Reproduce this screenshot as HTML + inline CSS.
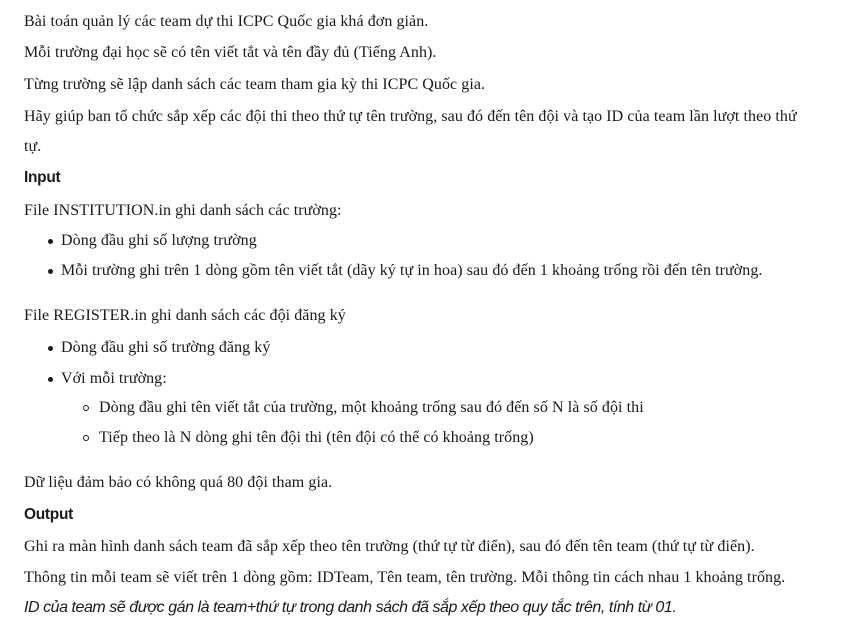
<!DOCTYPE html>
<html><head><meta charset="utf-8"><style>
html,body{margin:0;padding:0;background:#fff;width:845px;height:624px;overflow:hidden}
.l{position:absolute;left:24px;font-family:"Liberation Serif","Noto Serif CJK SC",serif;font-size:16px;line-height:20px;color:#1a1a1a;white-space:nowrap;letter-spacing:0.07px}
.h{font-family:"Liberation Sans",sans-serif;font-weight:bold;font-size:15.5px;letter-spacing:-0.3px}
.i{font-family:"Liberation Sans",sans-serif;font-style:italic;font-size:16px;letter-spacing:-0.45px}
.b{left:61px}.b::before{content:"";position:absolute;left:-13px;top:8px;width:5px;height:5px;border-radius:50%;background:#1a1a1a}
.c{left:99px}.c::before{content:"";position:absolute;left:-16px;top:7px;width:4px;height:4px;border-radius:50%;border:1px solid #1a1a1a}
</style></head><body>
<div class="l" style="top:12px">Bài toán quản lý các team dự thi ICPC Quốc gia khá đơn giản.</div>
<div class="l" style="top:43px">Mỗi trường đại học sẽ có tên viết tắt và tên đầy đủ (Tiếng Anh).</div>
<div class="l" style="top:75px">Từng trường sẽ lập danh sách các team tham gia kỳ thi ICPC Quốc gia.</div>
<div class="l" style="top:107px">Hãy giúp ban tổ chức sắp xếp các đội thi theo thứ tự tên trường, sau đó đến tên đội và tạo ID của team lần lượt theo thứ</div>
<div class="l" style="top:137px">tự.</div>
<div class="l h" style="top:168px">Input</div>
<div class="l" style="top:201px">File INSTITUTION.in ghi danh sách các trường:</div>
<div class="l b" style="top:231px">Dòng đầu ghi số lượng trường</div>
<div class="l b" style="top:261px">Mỗi trường ghi trên 1 dòng gồm tên viết tắt (dãy ký tự in hoa) sau đó đến 1 khoảng trống rồi đến tên trường.</div>
<div class="l" style="top:306px">File REGISTER.in ghi danh sách các đội đăng ký</div>
<div class="l b" style="top:338px">Dòng đầu ghi số trường đăng ký</div>
<div class="l b" style="top:369px">Với mỗi trường:</div>
<div class="l c" style="top:398px">Dòng đầu ghi tên viết tắt của trường, một khoảng trống sau đó đến số N là số đội thi</div>
<div class="l c" style="top:428px">Tiếp theo là N dòng ghi tên đội thi (tên đội có thể có khoảng trống)</div>
<div class="l" style="top:473px">Dữ liệu đảm bảo có không quá 80 đội tham gia.</div>
<div class="l h" style="top:505px">Output</div>
<div class="l" style="top:537px">Ghi ra màn hình danh sách team đã sắp xếp theo tên trường (thứ tự từ điển), sau đó đến tên team (thứ tự từ điển).</div>
<div class="l" style="top:568px">Thông tin mỗi team sẽ viết trên 1 dòng gồm: IDTeam, Tên team, tên trường. Mỗi thông tin cách nhau 1 khoảng trống.</div>
<div class="l i" style="top:598px">ID của team sẽ được gán là team+thứ tự trong danh sách đã sắp xếp theo quy tắc trên, tính từ 01.</div>
</body></html>
